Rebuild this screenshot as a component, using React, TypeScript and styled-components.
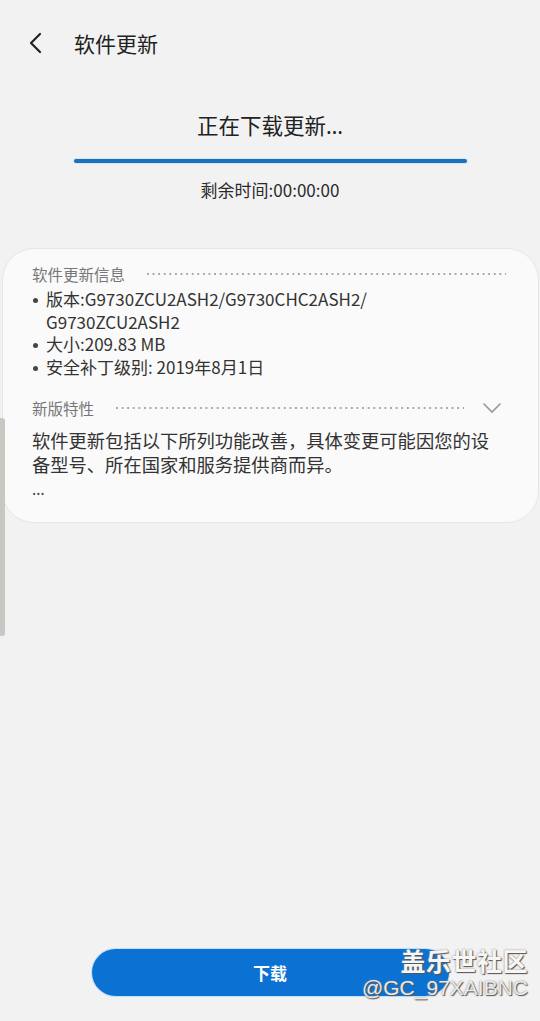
import React from "react";
import styled, { createGlobalStyle } from "styled-components";

const GlobalStyle = createGlobalStyle`
    html, body {
        margin: 0;
        padding: 0;
        background: #f2f2f2;
    }
    body {
        font-family: "Noto Sans CJK SC", "Noto Sans", sans-serif;
    }
`

const Page = styled.div`
    position: relative;
    height: 1021px;
    display: flex;
    flex-direction: column;
    background: #f2f2f2;
    overflow: hidden;
`

const Header = styled.div`
    height: 86px;
    display: flex;
    align-items: center;
    padding-left: 26px;
    box-sizing: border-box;
`

const BackBtn = styled.button`
    width: 20px;
    height: 24px;
    padding: 0;
    border: none;
    background: transparent;
    display: flex;
    align-items: center;
    justify-content: center;
    margin-right: 28px;
`

const HeaderTitle = styled.h1`
    margin: 0;
    font-size: 21px;
    font-weight: 400;
    color: #222;
`

const Status = styled.div`
    display: flex;
    flex-direction: column;
    align-items: center;
    margin-top: 24px;
`

const StatusTitle = styled.div`
    font-size: 21.5px;
    line-height: 30px;
    color: #222;
`

const Ellipsis = styled.span`
    font-family: "Noto Sans", sans-serif;
`

const Track = styled.div`
    width: 393px;
    height: 4px;
    margin-top: 18px;
    border-radius: 2px;
    background: #1e70b8;
    box-shadow: 0 0 0 1px #cde8f8;
`

const TimeLeft = styled.div`
    margin-top: 15px;
    font-size: 17px;
    line-height: 24px;
    color: #2a2a2a;
`

const Card = styled.div`
    margin: 46px 1px 0 2px;
    padding: 13px 32px 20px 29px;
    background: #fafafa;
    border: 1px solid #e6e6e6;
    border-radius: 32px;
    box-sizing: border-box;
`

const SectionHead = styled.div<{ $gap?: number }>`
    display: flex;
    align-items: center;
    height: 24px;
    margin-top: ${p => p.$gap ?? 0}px;
`

const SectionLabel = styled.span`
    font-size: 15.5px;
    color: #777;
    white-space: nowrap;
`

const Dots = styled.div`
    flex: 1;
    height: 2px;
    margin-left: 22px;
    background-image: linear-gradient(to right, #a8a8a8 2px, transparent 2px);
    background-size: 5.6px 2px;
    background-repeat: repeat-x;
`

const Chevron = styled.div`
    width: 20px;
    height: 14px;
    margin-left: 18px;
    margin-right: 4px;
    display: flex;
    align-items: center;
    justify-content: center;
`

const List = styled.ul`
    list-style: none;
    margin: 2px 0 0 0;
    padding: 0;
`

const Item = styled.li`
    position: relative;
    padding-left: 14px;
    font-size: 17px;
    line-height: 22.5px;
    color: #333;

    &::before {
        content: "";
        position: absolute;
        left: 1px;
        top: 10px;
        width: 5px;
        height: 5px;
        border-radius: 50%;
        background: #444;
    }
`

const Body = styled.p`
    max-width: 465px;
    margin: 8px 0 0 0;
    font-size: 18.3px;
    line-height: 24px;
    color: #333;
`

const More = styled.div`
    font-family: "Noto Sans", sans-serif;
    font-size: 16px;
    line-height: 26px;
    color: #444;
`

const Footer = styled.div`
    margin-top: auto;
    padding-bottom: 25px;
    display: flex;
    justify-content: center;
`

const DownloadBtn = styled.button`
    width: 357px;
    height: 47px;
    border: none;
    border-radius: 24px;
    background: #0b72d3;
    box-shadow: 0 0 0 1px #bfe2f8;
    color: #fff;
    font-family: "Noto Sans CJK SC", sans-serif;
    font-size: 17px;
    font-weight: 700;
`

const ScrollThumb = styled.div`
    position: absolute;
    left: 0;
    top: 418px;
    width: 5px;
    height: 218px;
    background: #c9c7c3;
    border-radius: 0 3px 3px 0;
`

const Watermark = styled.div`
    position: absolute;
    right: 12px;
    bottom: 20px;
    display: flex;
    flex-direction: column;
    align-items: flex-end;
    color: #f6f6f6;
    text-shadow: 1px 1px 1px #555, 0 0 2px #888;
`

const WatermarkName = styled.div`
    font-size: 25px;
    font-weight: 700;
    line-height: 30px;
    letter-spacing: 0.5px;
`

const WatermarkId = styled.div`
    font-family: "Liberation Sans", Arial, sans-serif;
    font-size: 21px;
    line-height: 26px;
    color: #eaeaea;
`

export default function App() {
    return (
        <>
            <GlobalStyle />
            <Page>
                <Header>
                    <BackBtn aria-label="back">
                        <svg width="14" height="22" viewBox="0 0 14 22">
                            <path d="M11 2 L2 11 L11 20" fill="none" stroke="#222" strokeWidth="2.2" strokeLinecap="round" strokeLinejoin="round" />
                        </svg>
                    </BackBtn>
                    <HeaderTitle>软件更新</HeaderTitle>
                </Header>

                <Status>
                    <StatusTitle>正在下载更新<Ellipsis>…</Ellipsis></StatusTitle>
                    <Track />
                    <TimeLeft>剩余时间:00:00:00</TimeLeft>
                </Status>

                <Card>
                    <SectionHead>
                        <SectionLabel>软件更新信息</SectionLabel>
                        <Dots />
                    </SectionHead>
                    <List>
                        <Item>版本:G9730ZCU2ASH2/G9730CHC2ASH2/<br />G9730ZCU2ASH2</Item>
                        <Item>大小:209.83 MB</Item>
                        <Item>安全补丁级别: 2019年8月1日</Item>
                    </List>

                    <SectionHead $gap={18}>
                        <SectionLabel>新版特性</SectionLabel>
                        <Dots />
                        <Chevron>
                            <svg width="20" height="12" viewBox="0 0 20 12">
                                <path d="M1.5 1.5 L10 10 L18.5 1.5" fill="none" stroke="#999" strokeWidth="1.6" />
                            </svg>
                        </Chevron>
                    </SectionHead>
                    <Body>软件更新包括以下所列功能改善，具体变更可能因您的设备型号、所在国家和服务提供商而异。</Body>
                    <More>…</More>
                </Card>

                <Footer>
                    <DownloadBtn>下载</DownloadBtn>
                </Footer>

                <ScrollThumb />
                <Watermark>
                    <WatermarkName>盖乐世社区</WatermarkName>
                    <WatermarkId>@GC_97XAIBNC</WatermarkId>
                </Watermark>
            </Page>
        </>
    );
}
